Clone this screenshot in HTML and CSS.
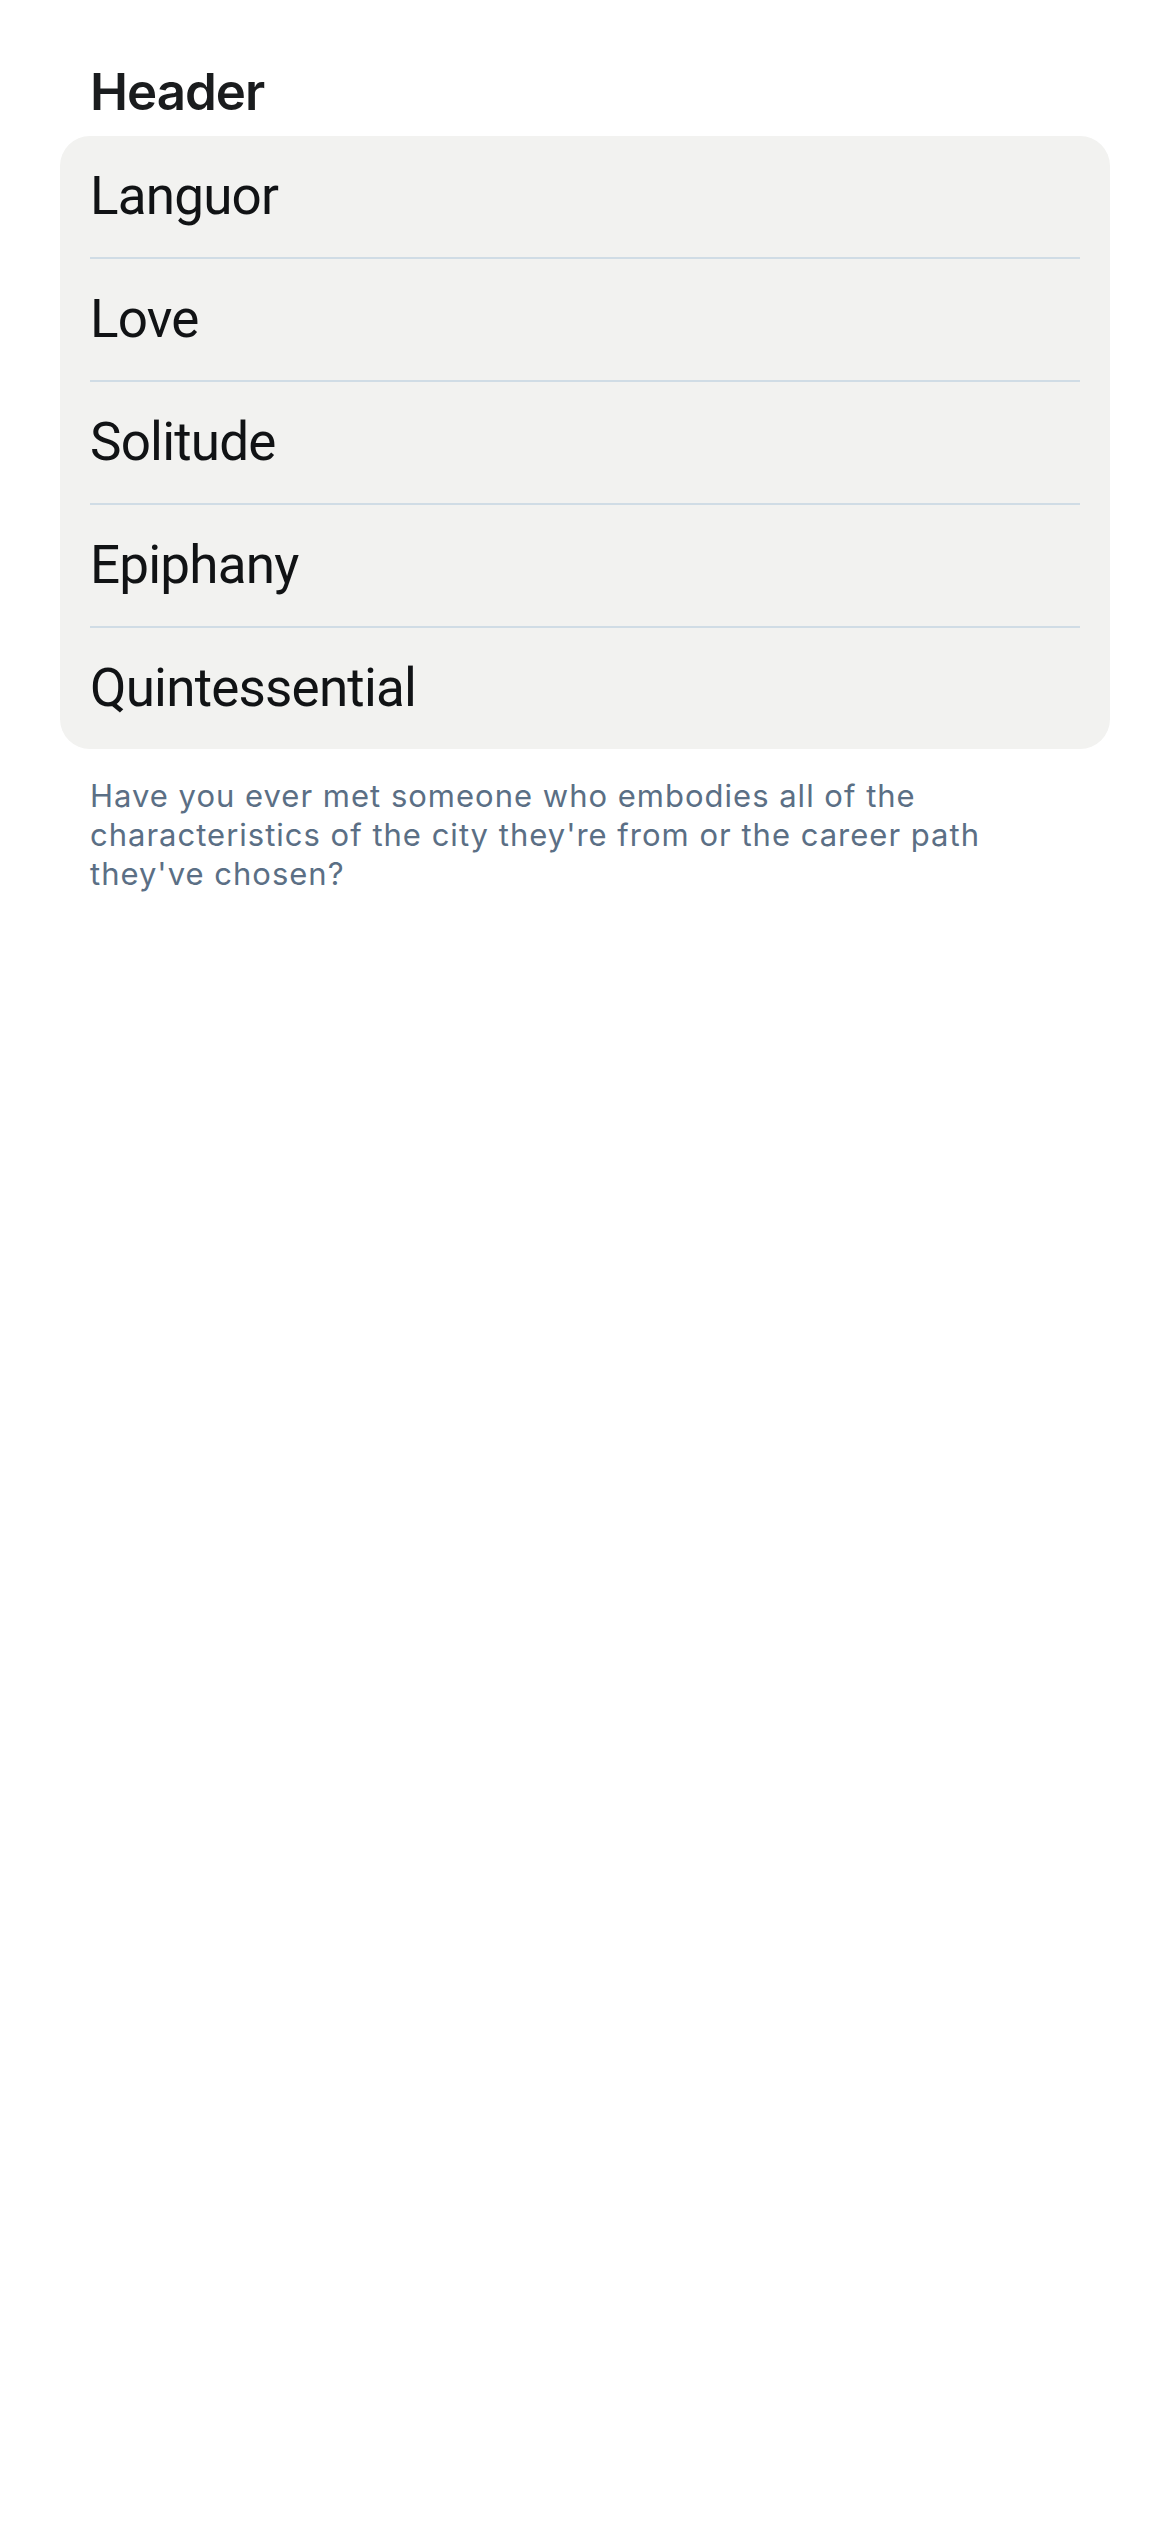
FILE: index.html
```html
<!DOCTYPE html>
<html lang="en">
<head>
<meta charset="utf-8">
<title>List</title>
<link rel="stylesheet" href="styles.css">
</head>
<body>
<main class="page">
  <h1 class="section-header">Header</h1>
  <ul class="list-card">
    <li class="list-row">Languor</li>
    <li class="list-row">Love</li>
    <li class="list-row">Solitude</li>
    <li class="list-row">Epiphany</li>
    <li class="list-row">Quintessential</li>
  </ul>
  <p class="section-footer">Have you ever met someone who embodies all of the characteristics of the city they're from or the career path they've chosen?</p>
</main>
</body>
</html>
```
FILE: styles.css
```css
html, body {
  margin: 0;
  padding: 0;
  background: #ffffff;
}
body {
  font-family: "Inter", "Noto Sans", "Liberation Sans", sans-serif;
  color: #111315;
}
.page {
  padding: 61px 60px 0 60px;
  display: flex;
  flex-direction: column;
}
.section-header {
  margin: 0 0 14px 0;
  padding: 0 30px;
  font-size: 51px;
  line-height: 61px;
  font-weight: 600;
  letter-spacing: -1px;
  color: #1a1c1e;
}
.list-card {
  list-style: none;
  margin: 0;
  padding: 0 30px;
  background: #f2f2f0;
  border-radius: 30px;
  display: flex;
  flex-direction: column;
}
.list-row {
  height: 121px;
  display: flex;
  align-items: center;
  font-family: "Roboto", "Inter", sans-serif;
  font-size: 53px;
  line-height: 65px;
  font-weight: 400;
  letter-spacing: -0.8px;
  color: #111315;
  border-bottom: 2px solid #d0dce5;
}
.list-row:last-child {
  border-bottom: none;
}
.section-footer {
  margin: 27px 0 0 0;
  padding: 0 30px;
  font-size: 31px;
  line-height: 39px;
  letter-spacing: 1px;
  color: #5b6f85;
}
```
